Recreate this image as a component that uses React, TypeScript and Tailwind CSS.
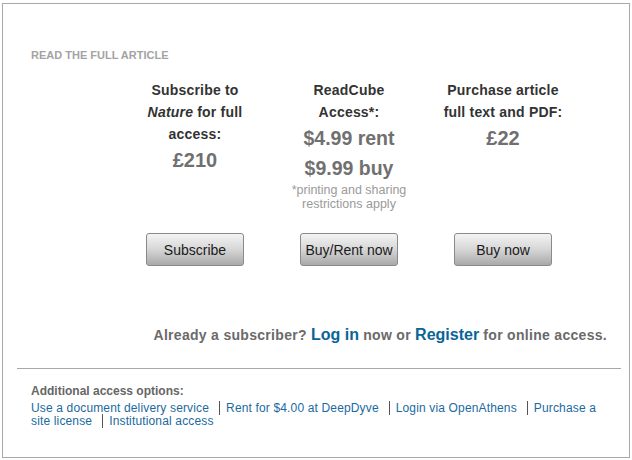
import React from "react";

const font = { fontFamily: '"Liberation Sans", Arial, sans-serif' };

function Btn({ label }: { label: string }) {
  return (
    <button
      className="w-[98px] h-[33px] rounded-[3px] border border-[#8a8a8a] bg-gradient-to-b from-[#f4f4f4] via-[#d6d6d6] to-[#a9a9a9] text-[14px] text-[#1a1a1a] leading-none"
      style={font}
    >
      {label}
    </button>
  );
}

function Col({ children, label }: { children: React.ReactNode; label: string }) {
  return (
    <div className="w-[154px] flex flex-col items-center text-center">
      <div>{children}</div>
      <div className="mt-auto pt-[22px]">
        <Btn label={label} />
      </div>
    </div>
  );
}

const sep = "border-l border-[#555] ml-[10px] pl-[6px]";

export default function App() {
  return (
    <div className="pt-[3px] pl-[2px] bg-white" style={font}>
      <div className="w-[628px] h-[455px] border border-[#a8a8a8] pl-[14px] pr-[8px]">
        <div className="px-[14px] pt-[45px]">
          <div className="text-[11px] leading-[13px] font-bold text-[#a3a3a3] uppercase">
            Read the full article
          </div>
          <div className="flex mt-[17px] ml-[87px]">
            <Col label="Subscribe">
              <div className="text-[14px] leading-[22px] font-bold text-[#333] tracking-[0.2px]">
                Subscribe to
                <br />
                <i>Nature</i> for full
                <br />
                access:
              </div>
              <div className="text-[20px] leading-[30px] font-bold text-[#707070]">£210</div>
            </Col>
            <Col label="Buy/Rent now">
              <div className="text-[14px] leading-[22px] font-bold text-[#333] tracking-[0.2px]">
                ReadCube
                <br />
                Access*:
              </div>
              <div className="text-[19.5px] leading-[30px] font-bold text-[#707070]">$4.99 rent</div>
              <div className="text-[19.5px] leading-[30px] font-bold text-[#707070]">$9.99 buy</div>
              <div className="text-[12.5px] leading-[14px] text-[#9a9a9a]">
                *printing and sharing
                <br />
                restrictions apply
              </div>
            </Col>
            <Col label="Buy now">
              <div className="text-[14px] leading-[22px] font-bold text-[#333] tracking-[0.2px]">
                Purchase article
                <br />
                full text and PDF:
              </div>
              <div className="text-[20px] leading-[30px] font-bold text-[#707070]">£22</div>
            </Col>
          </div>
          <div className="mt-[59px] text-right text-[14px] leading-[20px] font-bold text-[#6a6a6a] tracking-[0.3px]">
            Already a subscriber?{" "}
            <a className="text-[16px] text-[#0a6496] tracking-normal">Log in</a> now or{" "}
            <a className="text-[16px] text-[#0a6496] tracking-normal">Register</a> for online access.
          </div>
        </div>
        <div className="mt-[23px] h-px bg-[#a8a8a8]" />
        <div className="px-[14px] pt-[15px]">
          <div className="text-[12px] leading-[14px] font-bold text-[#666]">
            Additional access options:
          </div>
          <div className="text-[12px] leading-[13px] text-[#1a6aa0] mt-[4px] tracking-[0.15px]">
            <a>Use a document delivery service</a>
            <a className={sep}>Rent for $4.00 at DeepDyve</a>
            <a className={sep}>Login via OpenAthens</a>
            <a className={sep}>Purchase a site license</a>
            <a className={sep}>Institutional access</a>
          </div>
        </div>
      </div>
    </div>
  );
}
